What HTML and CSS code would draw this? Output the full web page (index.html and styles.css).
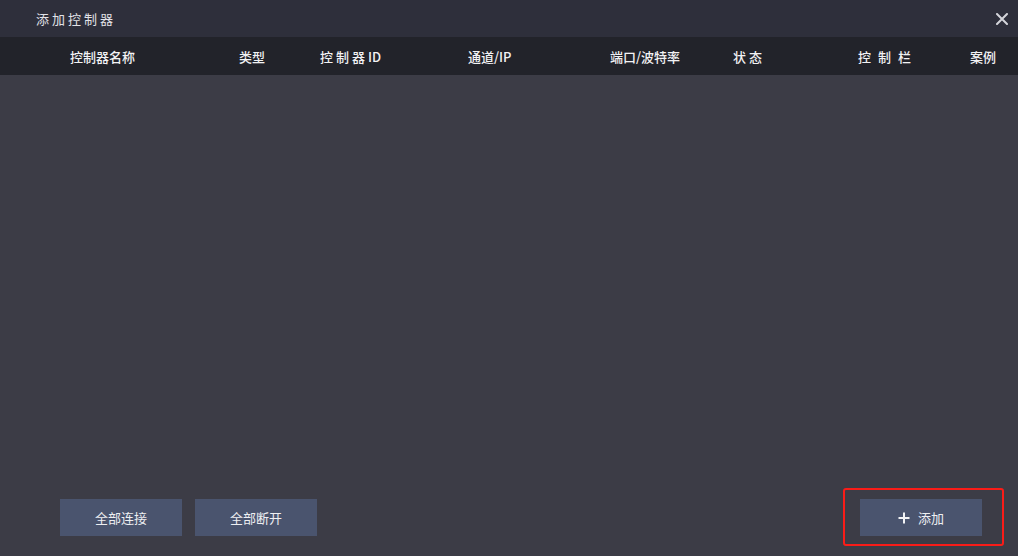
FILE: index.html
```html
<!DOCTYPE html>
<html lang="zh-CN">

<head>
  <meta charset="UTF-8" />
  <title>添加控制器</title>
  <link rel="stylesheet" href="styles.css">
</head>

<body>
  <div class="dialog">
    <div class="title-bar">
      <span class="title">添加控制器</span>
      <button class="close-btn" aria-label="关闭">
        <svg width="12" height="12" viewBox="0 0 12 12">
          <path d="M1 1 L11 11 M11 1 L1 11" stroke="#d4d5da" stroke-width="2" stroke-linecap="round" />
        </svg>
      </button>
    </div>

    <div class="table-head">
      <span>控制器名称</span>
      <span>类型</span>
      <span><span class="spaced">控制器</span>ID</span>
      <span>通道/IP</span>
      <span>端口/波特率</span>
      <span class="spaced">状态</span>
      <span class="wide">控制栏</span>
      <span>案例</span>
    </div>

    <div class="table-body"></div>

    <div class="footer">
      <div class="footer-left">
        <button class="btn">全部连接</button>
        <button class="btn">全部断开</button>
      </div>
      <div class="highlight">
        <button class="btn btn-add">
          <svg class="plus" width="12" height="12" viewBox="0 0 12 12">
            <path d="M6 0.5 V11.5 M0.5 6 H11.5" stroke="#f2f3f5" stroke-width="2" />
          </svg>
          添加
        </button>
      </div>
    </div>
  </div>
</body>

</html>
```

FILE: styles.css
```css
* {
  box-sizing: border-box;
}

body {
  margin: 0;
  font-family: "Noto Sans CJK SC", "Noto Sans", sans-serif;
  background: #3c3c46;
}

.dialog {
  width: 1018px;
  height: 556px;
  display: flex;
  flex-direction: column;
  background: #3c3c46;
}

.title-bar {
  height: 37px;
  background: #2e2f3b;
  display: flex;
  align-items: center;
  justify-content: space-between;
  padding: 0 10px 0 36px;
}

.title {
  color: #e2e3e8;
  font-size: 13px;
  letter-spacing: 3px;
}

.close-btn {
  background: none;
  border: none;
  padding: 0;
  width: 12px;
  height: 12px;
  display: flex;
  cursor: pointer;
}

.table-head {
  height: 38px;
  background: #22232a;
  display: grid;
  grid-template-columns: 169px 81px 148px 142px 123px 125px 112px 1fr;
  align-items: center;
  padding-left: 70px;
  color: #f2f2f4;
  font-size: 13px;
  font-weight: 500;
}

.table-head .spaced {
  letter-spacing: 3px;
}

.table-head .wide {
  letter-spacing: 7px;
}

.table-body {
  flex: 1;
}

.footer {
  display: flex;
  align-items: center;
  justify-content: space-between;
  padding: 0 14px 10px 60px;
}

.footer-left {
  display: flex;
  gap: 13px;
}

.btn {
  width: 122px;
  height: 37px;
  background: #4a546e;
  color: #eeeff2;
  border: none;
  font-family: inherit;
  font-size: 13px;
  cursor: pointer;
}

.btn:hover {
  background: #566181;
}

.highlight {
  border: 2px solid #fa1c18;
  border-radius: 3px;
  padding: 9px 20px 8px 15px;
}

.btn-add {
  display: flex;
  align-items: center;
  justify-content: center;
  gap: 8px;
  padding-right: 6px;
}
```
